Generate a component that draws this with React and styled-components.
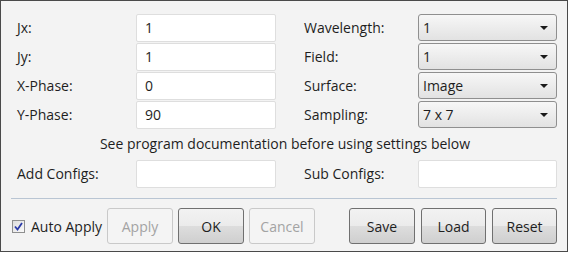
import React from 'react'
import styled, { createGlobalStyle } from 'styled-components'

const GlobalStyle = createGlobalStyle`
  html, body {
    margin: 0;
    padding: 0;
    background: #ffffff;
  }
  body {
    font-family: "Open Sans", "Noto Sans", sans-serif;
    font-size: 14px;
    color: #1e1e1e;
  }
`

const Frame = styled.div`
  box-sizing: border-box;
  width: 568px;
  height: 252px;
  margin: 0;
  border: 1px solid #4a4a4a;
  background: #f3f3f3;
  padding: 12px 10px 0 16px;
  display: flex;
  flex-direction: column;
`

const FieldGrid = styled.div`
  display: grid;
  grid-template-columns: 119px 140px 28px 114px 139px;
  grid-auto-rows: 29px;
  align-items: center;
`

const Label = styled.div`
  grid-column: ${p => p.$col};
  white-space: nowrap;
`

const TextBox = styled.div`
  grid-column: ${p => p.$col};
  box-sizing: border-box;
  height: 28px;
  background: #ffffff;
  border: 1px solid #dedede;
  border-radius: 2px;
  padding: 0 8px;
  display: flex;
  align-items: center;
`

const Select = styled.div`
  grid-column: ${p => p.$col};
  box-sizing: border-box;
  height: 27px;
  background: linear-gradient(#f7f7f7, #e2e2e2);
  border: 1px solid #8f8f8f;
  border-radius: 3px;
  padding: 0 8px 0 4px;
  display: flex;
  align-items: center;
  justify-content: space-between;
`

const Caret = styled.span`
  width: 0;
  height: 0;
  border-left: 4px solid transparent;
  border-right: 4px solid transparent;
  border-top: 4px solid #1a1a1a;
`

const Note = styled.div`
  text-align: center;
  height: 30px;
  line-height: 30px;
  padding-right: 4px;
`

const Separator = styled.div`
  height: 1px;
  background: #b9c5d3;
  margin: 10px 0 9px -6px;
`

const ButtonRow = styled.div`
  display: flex;
  align-items: center;
  margin-left: -5px;
`

const Check = styled.label`
  width: 95px;
  display: flex;
  align-items: center;
  gap: 6px;
  white-space: nowrap;
`

const Box = styled.span`
  box-sizing: border-box;
  width: 13px;
  height: 13px;
  border: 1px solid #8e8f8f;
  background: linear-gradient(135deg, #dcdcdc, #fafafa);
  display: flex;
  align-items: center;
  justify-content: center;
`

const Button = styled.div`
  box-sizing: border-box;
  width: ${p => p.$w || 66}px;
  height: 36px;
  margin-right: ${p => p.$gap ?? 5}px;
  border-radius: 3px;
  display: flex;
  align-items: center;
  justify-content: center;
  border: 1px solid ${p => (p.disabled ? '#c9c9c9' : '#707070')};
  background: ${p => (p.disabled ? '#f4f4f4' : 'linear-gradient(#f2f2f2 0%, #ebebeb 50%, #dddddd 51%, #cfcfcf 100%)')};
  color: ${p => (p.disabled ? '#a3a3a3' : '#1e1e1e')};
`

const App = () => {
  return (
    <>
      <GlobalStyle />
      <Frame>
        <FieldGrid>
          <Label $col={1}>Jx:</Label>
          <TextBox $col={2}>1</TextBox>
          <Label $col={4}>Wavelength:</Label>
          <Select $col={5}>1<Caret /></Select>

          <Label $col={1}>Jy:</Label>
          <TextBox $col={2}>1</TextBox>
          <Label $col={4}>Field:</Label>
          <Select $col={5}>1<Caret /></Select>

          <Label $col={1}>X-Phase:</Label>
          <TextBox $col={2}>0</TextBox>
          <Label $col={4}>Surface:</Label>
          <Select $col={5}>Image<Caret /></Select>

          <Label $col={1}>Y-Phase:</Label>
          <TextBox $col={2}>90</TextBox>
          <Label $col={4}>Sampling:</Label>
          <Select $col={5}>7 x 7<Caret /></Select>
        </FieldGrid>
        <Note>See program documentation before using settings below</Note>
        <FieldGrid>
          <Label $col={1}>Add Configs:</Label>
          <TextBox $col={2} />
          <Label $col={4}>Sub Configs:</Label>
          <TextBox $col={5} />
        </FieldGrid>
        <Separator />
        <ButtonRow>
          <Check>
            <Box>
              <svg width="9" height="9" viewBox="0 0 9 9">
                <path d="M1 4.5 L3.5 7.5 L8 1" fill="none" stroke="#2a3aa8" strokeWidth="1.8" />
              </svg>
            </Box>
            Auto Apply
          </Check>
          <Button disabled>Apply</Button>
          <Button>OK</Button>
          <Button disabled $gap={34}>Cancel</Button>
          <Button $gap={6}>Save</Button>
          <Button $w={65} $gap={6}>Load</Button>
          <Button $w={65} $gap={0}>Reset</Button>
        </ButtonRow>
      </Frame>
    </>
  )
}

export default App
